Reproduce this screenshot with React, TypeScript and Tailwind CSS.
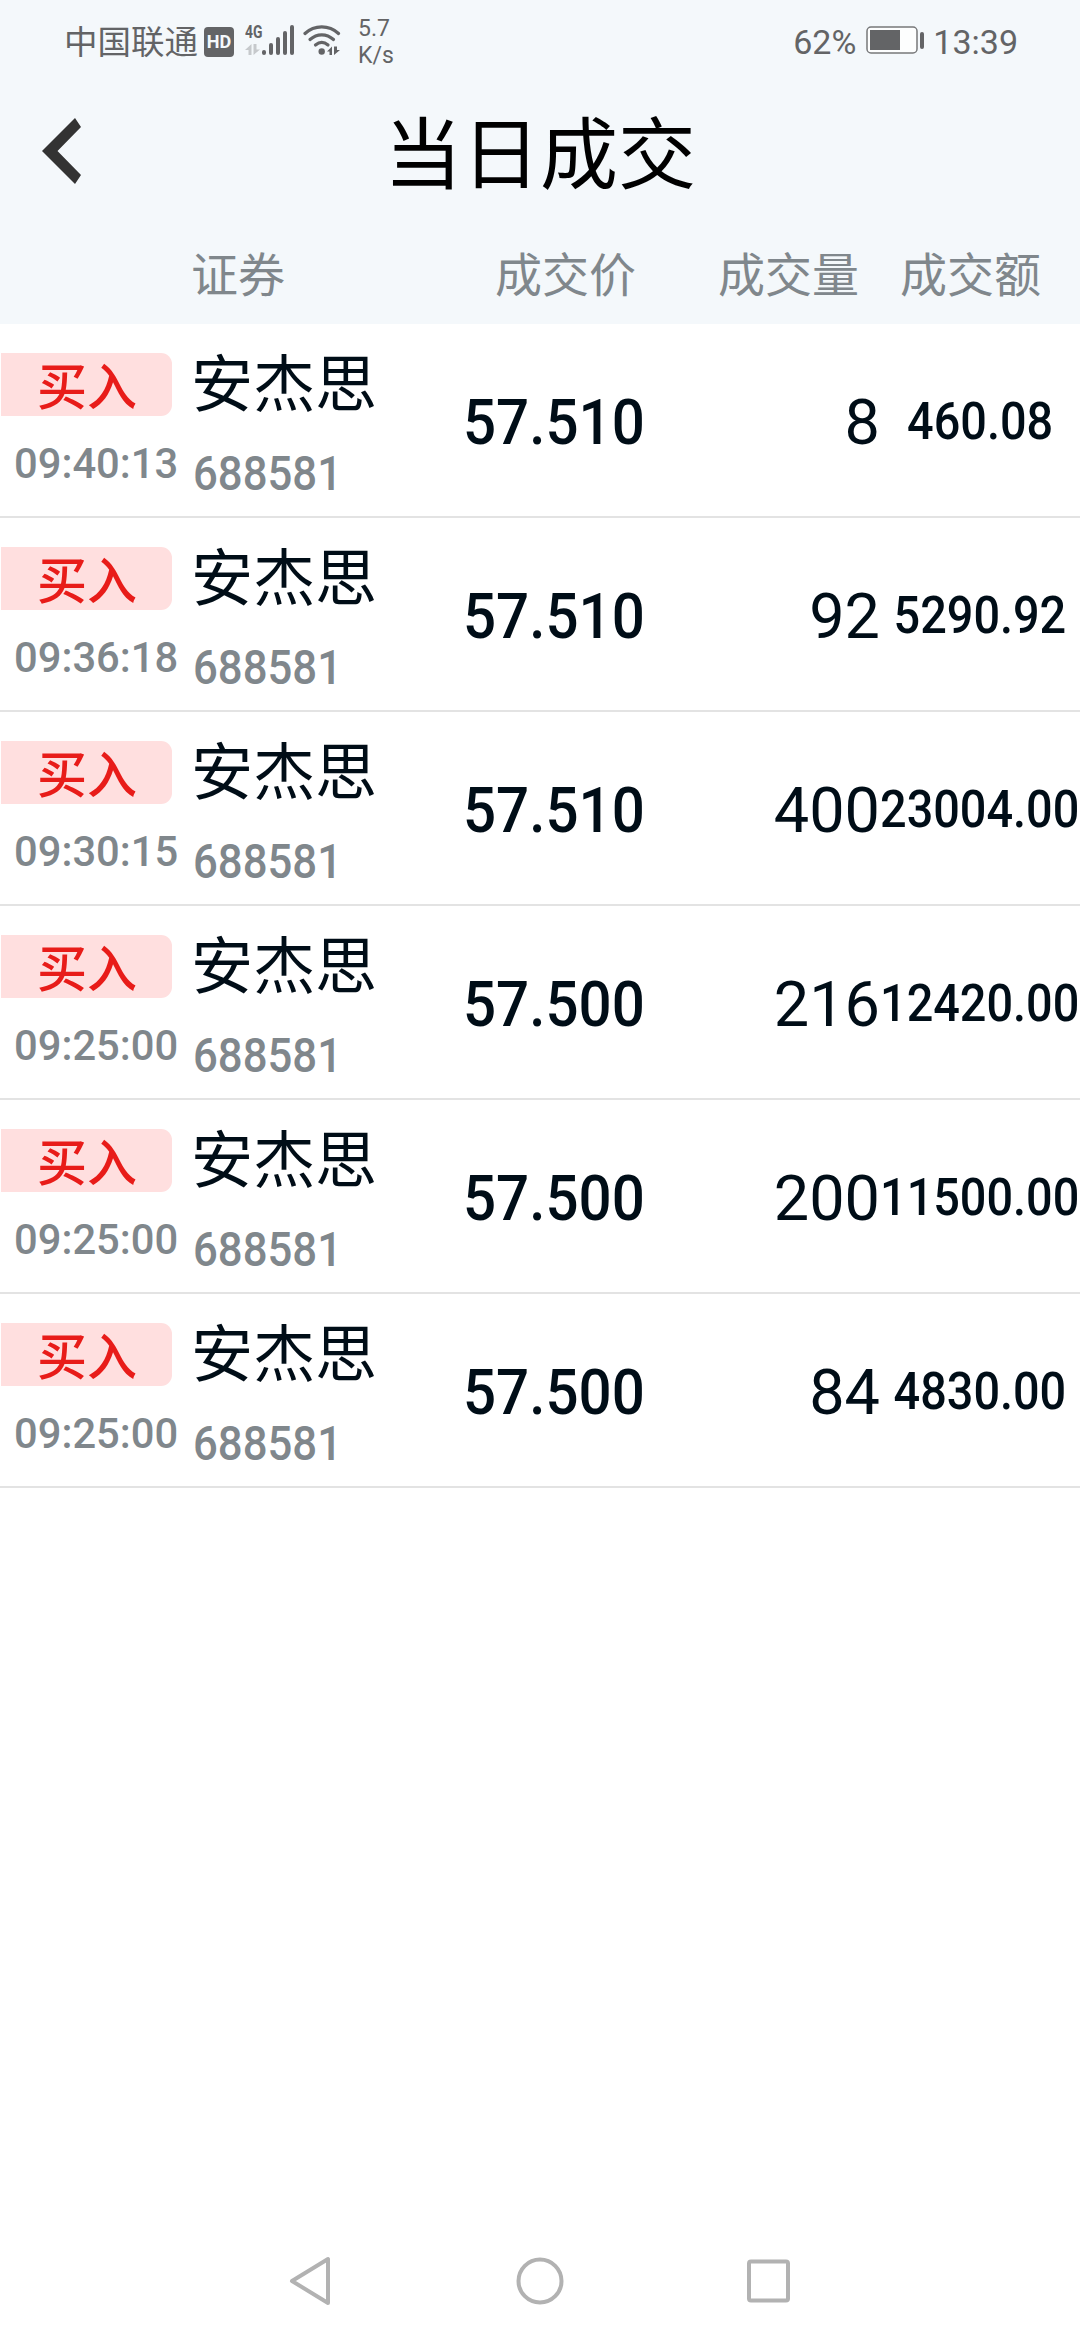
type Trade = {
  time: string;
  price: string;
  volume: string;
  amount: string;
};

const trades: Trade[] = [
  { time: "09:40:13", price: "57.510", volume: "8", amount: "460.08" },
  { time: "09:36:18", price: "57.510", volume: "92", amount: "5290.92" },
  { time: "09:30:15", price: "57.510", volume: "400", amount: "23004.00" },
  { time: "09:25:00", price: "57.500", volume: "216", amount: "12420.00" },
  { time: "09:25:00", price: "57.500", volume: "200", amount: "11500.00" },
  { time: "09:25:00", price: "57.500", volume: "84", amount: "4830.00" },
];

function SignalIcon() {
  return (
    <svg width="32" height="32" viewBox="0 0 32 32" fill="#636466">
      <rect x="0" y="26" width="4" height="5" rx="2" />
      <rect x="7" y="19" width="4" height="12" rx="2" />
      <rect x="14" y="13" width="4" height="18" rx="2" />
      <rect x="21" y="7" width="4" height="24" rx="2" />
      <rect x="28" y="1" width="4" height="30" rx="2" />
    </svg>
  );
}

function WifiIcon() {
  return (
    <svg width="38" height="32" viewBox="0 0 38 32" fill="none" stroke="#636466" strokeWidth="3.2" strokeLinecap="round">
      <path d="M2 9.5C11.5 .7 26 .7 35.5 9.5" />
      <path d="M7 15.500c7-6.300 16.500-6.300 23.500 0" />
      <path d="M12.500 21c4-3.400 8.500-3.400 12.500 0" />
      <circle cx="18.700" cy="27.500" r="3.200" fill="#636466" stroke="none" />
      <path d="M24 27.500l5-5v8.500h-2.500v-3.500zM31 22.500v8.500l6-5h-3v-3.500z" fill="#636466" stroke="none" />
    </svg>
  );
}

function StatusBar() {
  return (
    <div className="flex h-[83px] items-center justify-between pl-16 pr-[62px] text-[#636466]">
      <div className="flex items-center">
        <span className="pt-0.5 text-[33.5px] leading-10">中国联通</span>
        <span className="ml-1.5 flex h-[30px] w-[30px] items-center justify-center rounded-[4px] bg-[#636466] text-[19px] font-bold leading-none text-[#f4f8fb]">
          <span className="scale-x-95">HD</span>
        </span>
        <div className="ml-[11px] flex w-[17px] flex-col pb-1">
          <span className="origin-left scale-x-[0.75] text-[18.5px] font-bold leading-[17px]">4G</span>
          <svg width="15" height="11" viewBox="0 0 15 11" className="mt-[3px]" fill="#c6c9cc">
            <path d="M0 6L6.500 0v11H3.500V6zM8.500 0v11L15 5.500h-3.500V0z" />
          </svg>
        </div>
        <span className="-mt-1">
          <SignalIcon />
        </span>
        <span className="-mt-1 ml-[9px]">
          <WifiIcon />
        </span>
        <div className="ml-[17px] text-[23px] leading-[27px]">
          <div>5.7</div>
          <div>K/s</div>
        </div>
      </div>
      <div className="flex items-center">
        <span className="text-[34px] leading-10">62%</span>
        <svg width="59" height="28" viewBox="0 0 59 28" className="ml-[10px] -mt-1">
          <rect x="1" y="1" width="50" height="26" rx="4" fill="#fdfefe" stroke="#77787a" strokeWidth="1.500" />
          <rect x="4" y="4" width="30" height="20" fill="#636466" />
          <rect x="54" y="6" width="4" height="17" rx="2" fill="#636466" />
        </svg>
        <span className="ml-[8px] text-[34px] leading-10">13:39</span>
      </div>
    </div>
  );
}

function TradeRow({ trade }: { trade: Trade }) {
  return (
    <li className="grid h-[194px] grid-cols-[193px_270px_219px_198px_200px] border-b-2 border-[#e3e3e3] text-[#000d17]">
      <div className="pt-[29px]">
        <div className="ml-px flex h-[63px] w-[171px] items-center rounded-r-[11px] bg-[#ffdfdf] pl-[36px] pt-1.5 text-[50px] font-medium leading-none text-[#e81c19]">
          买入
        </div>
        <div className="ml-3.5 mt-[22px] origin-left scale-x-[0.97] whitespace-nowrap text-[43px] font-medium leading-[50px] text-[#80878c]">
          {trade.time}
        </div>
      </div>
      <div className="pt-[25px]">
        <div className="-ml-0.5 text-[62px] leading-[74px]">安杰思</div>
        <div className="mt-[23px] origin-left scale-x-[0.91] text-[48px] font-medium leading-[56px] text-[#80878c]">
          688581
        </div>
      </div>
      <div className="flex items-center pt-1">
        <span className="origin-left scale-x-[0.925] text-[63px] font-medium leading-none">{trade.price}</span>
      </div>
      <div className="flex items-center justify-end pt-1 text-[63px] leading-none">{trade.volume}</div>
      <div className="flex items-center justify-center pt-1">
        <span className="scale-x-[0.9] text-[52px] font-medium leading-none">{trade.amount}</span>
      </div>
    </li>
  );
}

export default function App() {
  return (
    <div className="flex h-[2340px] w-[1080px] flex-col overflow-hidden bg-white font-['Roboto','Noto_Sans_CJK_SC',sans-serif]">
      <header className="h-[324px] bg-[#f4f8fb]">
        <StatusBar />
        <div className="grid h-[142px] grid-cols-[1fr_auto_1fr] items-center">
          <svg width="40" height="66" viewBox="0 0 40 66" className="mb-1.5 ml-[42px]">
            <path d="M33 0l6 9L15.500 33 39 57l-6 9L0 33z" fill="#333" />
          </svg>
          <h1 className="pt-1.5 text-[78px] leading-[90px] text-black">当日成交</h1>
        </div>
        {/* Column titles */}
        <div className="flex h-[100px] items-center text-[47px] leading-none text-[#80878c]">
          <span className="ml-[191px]">证券</span>
          <span className="ml-[210px]">成交价</span>
          <span className="ml-[82px]">成交量</span>
          <span className="ml-[41px]">成交额</span>
        </div>
      </header>

      <ul className="flex-1">
        {trades.map((trade, i) => (
          <TradeRow key={i} trade={trade} />
        ))}
      </ul>

      {/* System navigation */}
      <nav className="flex h-[120px] items-center justify-center gap-[184px] pt-0.5">
        <svg width="46" height="50" viewBox="0 0 46 50" fill="none" stroke="#b2b2b2" strokeWidth="4" strokeLinejoin="round" className="-ml-0.5">
          <path d="M42 3v44L6 25z" />
        </svg>
        <svg width="48" height="48" viewBox="0 0 48 48" fill="none" stroke="#b2b2b2" strokeWidth="4">
          <circle cx="24" cy="24" r="21.500" />
        </svg>
        <svg width="46" height="46" viewBox="0 0 46 46" fill="none" stroke="#b2b2b2" strokeWidth="4" className="-ml-0.5">
          <rect x="3" y="3.500" width="39" height="39" rx="2" />
        </svg>
      </nav>
    </div>
  );
}
